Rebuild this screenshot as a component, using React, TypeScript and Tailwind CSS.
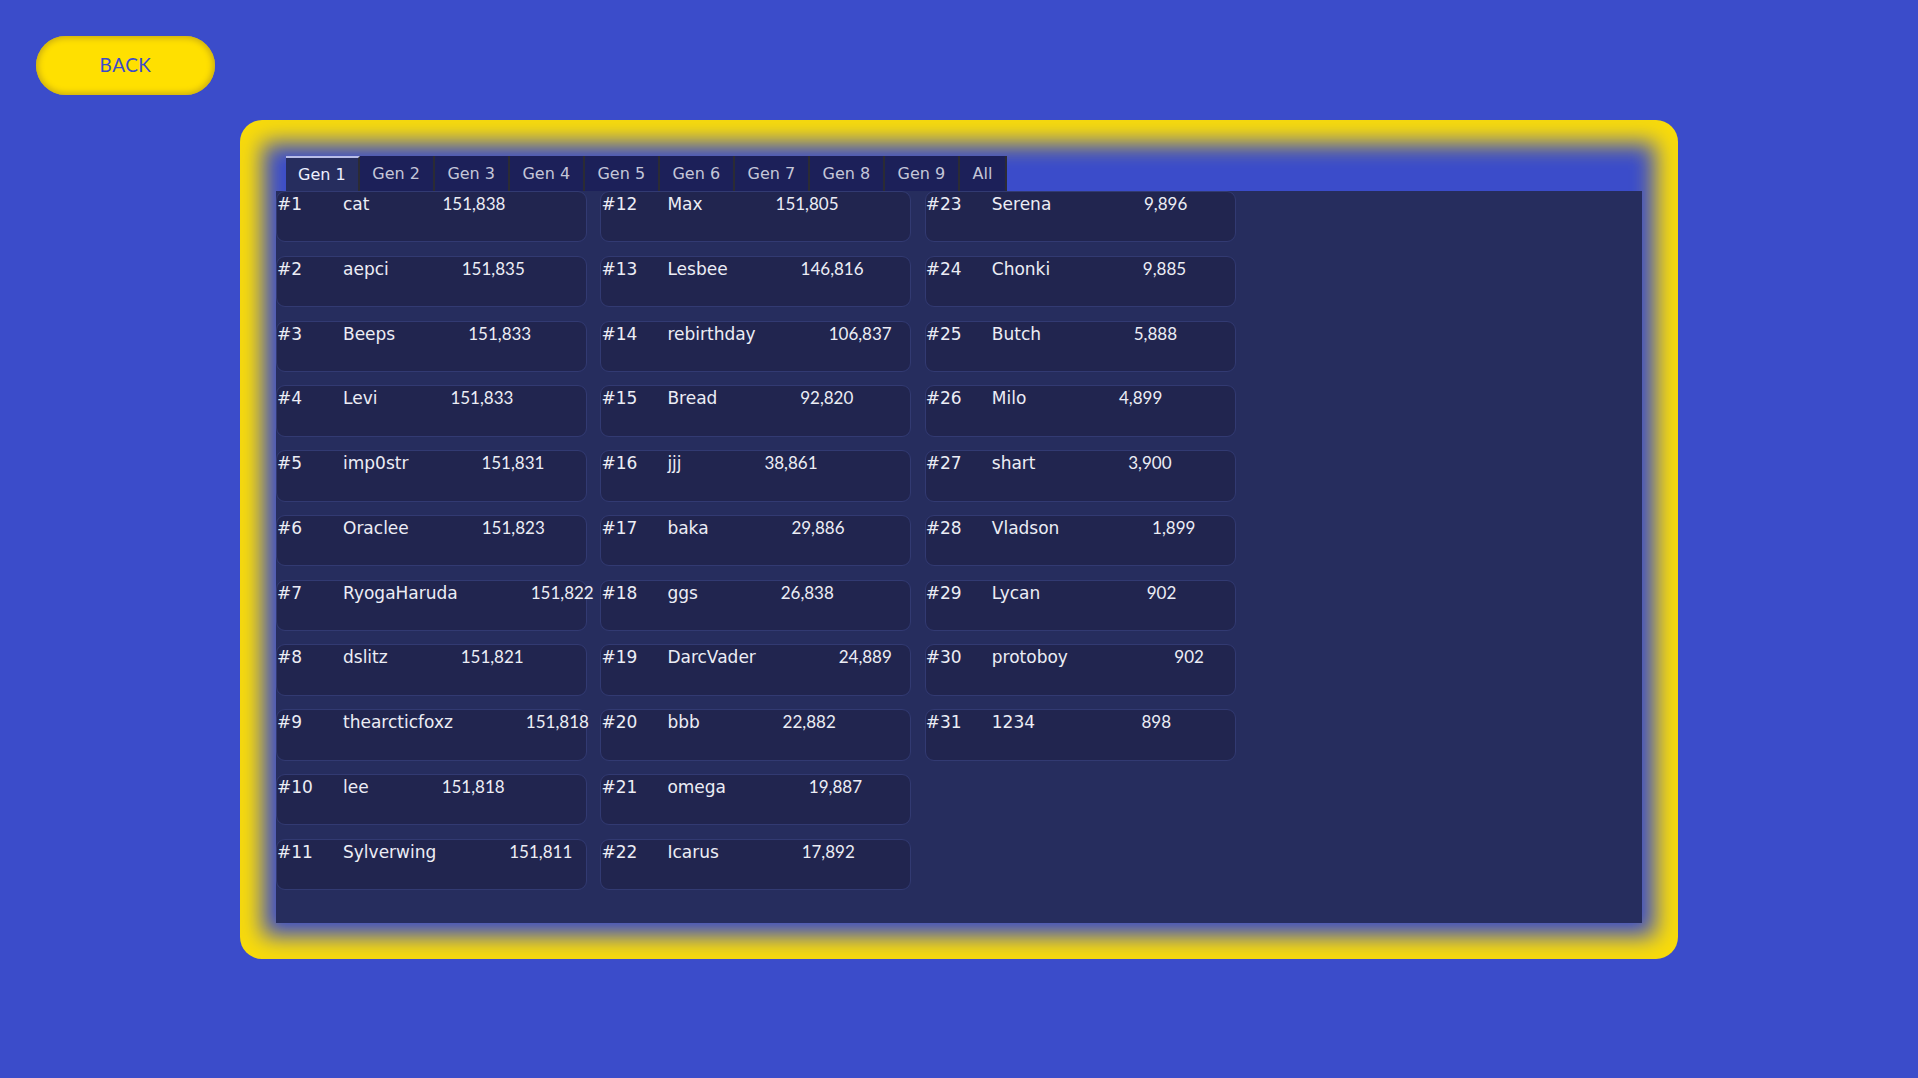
import React from 'react';

const tabs = ['Gen 1', 'Gen 2', 'Gen 3', 'Gen 4', 'Gen 5', 'Gen 6', 'Gen 7', 'Gen 8', 'Gen 9', 'All'];

const players: [string, string][] = [
  ['cat', '151,838'],
  ['aepci', '151,835'],
  ['Beeps', '151,833'],
  ['Levi', '151,833'],
  ['imp0str', '151,831'],
  ['Oraclee', '151,823'],
  ['RyogaHaruda', '151,822'],
  ['dslitz', '151,821'],
  ['thearcticfoxz', '151,818'],
  ['lee', '151,818'],
  ['Sylverwing', '151,811'],
  ['Max', '151,805'],
  ['Lesbee', '146,816'],
  ['rebirthday', '106,837'],
  ['Bread', '92,820'],
  ['jjj', '38,861'],
  ['baka', '29,886'],
  ['ggs', '26,838'],
  ['DarcVader', '24,889'],
  ['bbb', '22,882'],
  ['omega', '19,887'],
  ['Icarus', '17,892'],
  ['Serena', '9,896'],
  ['Chonki', '9,885'],
  ['Butch', '5,888'],
  ['Milo', '4,899'],
  ['shart', '3,900'],
  ['Vladson', '1,899'],
  ['Lycan', '902'],
  ['protoboy', '902'],
  ['1234', '898'],
];

export default function App() {
  return (
    <div className="min-h-screen bg-[#3b4cca] p-[36px] font-['DejaVu_Sans',sans-serif]">
      {/* Back button */}
      <button className="w-[179px] h-[59px] rounded-full bg-[#ffe000] shadow-[inset_0_0_6px_2px_#c9ab12] text-[#3b4cca] text-[19px] font-['Lato',sans-serif] tracking-wide">
        BACK
      </button>

      {/* Leaderboard frame */}
      <div className="mt-[25px] mx-auto w-[1438px] h-[839px] rounded-[22px] bg-[#3b4cca] shadow-[inset_0_0_22px_23px_#f9dc0a] p-[36px] flex flex-col">
        <div className="flex ml-[10px] h-[35px]">
          {tabs.map((t, i) => (
            <div
              key={t}
              className={
                i === 0
                  ? 'h-full px-[12px] flex items-center text-[16px] text-[#eef0ff] bg-[#262d5e] border-t-2 border-t-[#b8bde8] border-r-2 border-r-[#2b2b35]'
                  : 'h-full px-[12.7px] flex items-center text-[16px] text-[#c4c6d8] bg-[#1c2059] border-r-2 border-r-[#2b2b35]'
              }
            >
              {t}
            </div>
          ))}
        </div>

        <div className="flex-1 bg-[#262d5e]">
          <div className="grid grid-flow-col grid-rows-[repeat(11,51.4px)] auto-cols-[311px] gap-[13.4px]">
            {players.map(([name, score], i) => (
              <div
                key={name + i}
                className="rounded-[9px] border border-[#323a72] bg-[#21254f] text-[17px] leading-[24px] text-[#ecedf5] whitespace-nowrap"
              >
                <span className="inline-block w-[66px]">#{i + 1}</span>
                <span>{name}</span>
                <span className="inline-block w-[136px] text-right font-['Lato',sans-serif]">{score}</span>
              </div>
            ))}
          </div>
        </div>
      </div>
    </div>
  );
}
